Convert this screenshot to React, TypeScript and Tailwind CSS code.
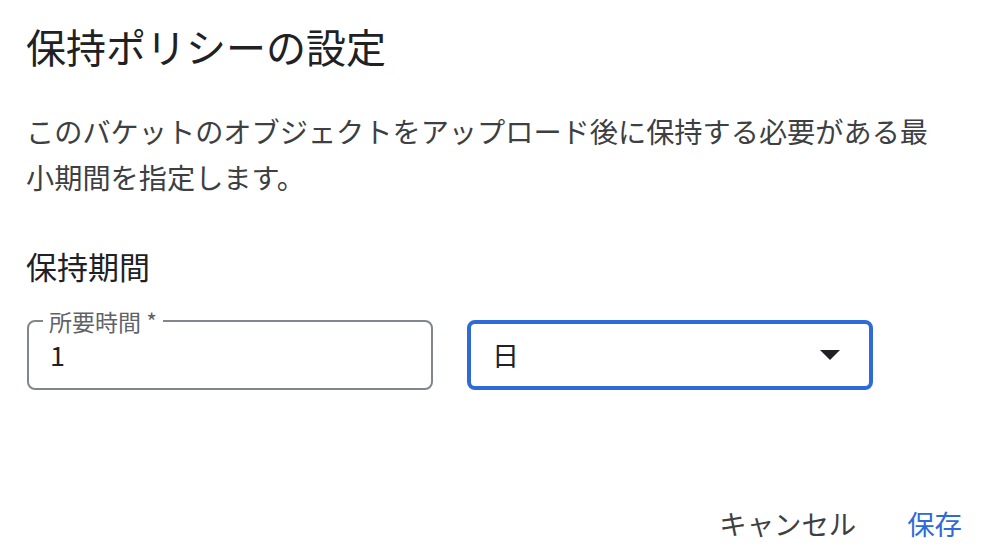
export default function App() {
  return (
    <div className="w-[982px] h-[558px] bg-white pl-[26px] pr-[20px] flex flex-col font-['Noto_Sans_CJK_JP','Noto_Sans',sans-serif]">
      <h1 className="mt-[22px] text-[40px] leading-[48px] text-[#202124] font-normal">保持ポリシーの設定</h1>
      <p className="mt-[38px] w-[912px] text-[28.2px] leading-[46px] text-[#3c4043]">
        このバケットのオブジェクトをアップロード後に保持する必要がある最小期間を指定します。
      </p>
      <h2 className="mt-[46px] text-[31px] leading-[40px] text-[#202124] font-normal">保持期間</h2>
      <div className="mt-[34px] ml-[1px] flex gap-[34px]">
        <div className="relative w-[406px] h-[70px] border-2 border-[#80868b] rounded-[8px] flex items-center pl-[21px]">
          <span className="absolute left-[14px] top-[-13px] bg-white px-[6px] text-[23px] leading-[24px] text-[#5f6368]">
            所要時間 *
          </span>
          <span className="text-[27px] leading-[32px] text-[#202124]">1</span>
        </div>
        <div className="w-[406px] h-[70px] border-[4px] border-[#2f6ad9] rounded-[8px] flex items-center justify-between pl-[21px] pr-[29px]">
          <span className="text-[27px] leading-[32px] text-[#202124]">日</span>
          <svg width="20" height="10" viewBox="0 0 20 10">
            <path d="M0 0 L20 0 L10 10 Z" fill="#202124" />
          </svg>
        </div>
      </div>
      <div className="mt-[113px] flex justify-end gap-[51px]">
        <span className="text-[27.4px] leading-[40px] text-[#3c4043]">キャンセル</span>
        <span className="text-[27.4px] leading-[40px] text-[#2f6ad9]">保存</span>
      </div>
    </div>
  );
}
